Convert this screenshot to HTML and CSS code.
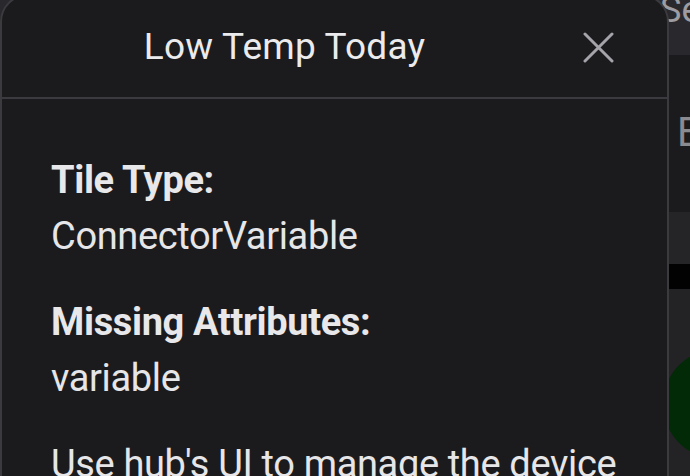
FILE: index.html
```
<!DOCTYPE html>
<html lang="en">
<head>
<meta charset="utf-8">
<title>Low Temp Today</title>
<link rel="stylesheet" href="styles.css">
</head>
<body>
<div class="app">
  <div class="topbar"><span class="topbar-title">Se</span></div>
  <div class="section"><span class="section-text">E</span></div>
  <div class="band"></div>
  <div class="blackbar"></div>
  <div class="tiles"><div class="tile-dot"></div></div>
</div>
<div class="dialog">
  <div class="dialog-header">
    <div class="dialog-title">Low Temp Today</div>
    <button class="close-btn" aria-label="Close">
      <svg width="31" height="31" viewBox="0 0 31 31"><path d="M2 2 L29 29 M29 2 L2 29" stroke="#a4a4aa" stroke-width="3" stroke-linecap="round" fill="none"/></svg>
    </button>
  </div>
  <div class="dialog-body">
    <div class="field">
      <div class="label">Tile Type:</div>
      <div class="value">ConnectorVariable</div>
    </div>
    <div class="field">
      <div class="label">Missing Attributes:</div>
      <div class="value">variable</div>
    </div>
    <div class="field">
      <div class="value">Use hub's UI to manage the device</div>
    </div>
  </div>
</div>
</body>
</html>
```
FILE: styles.css
```
* { box-sizing: border-box; }
html, body {
  margin: 0;
  padding: 0;
  width: 690px;
  height: 476px;
  overflow: hidden;
  background: #1c1c1f;
  font-family: Roboto, "Liberation Sans", sans-serif;
}
.app {
  display: flex;
  flex-direction: column;
  height: 476px;
}
.topbar {
  height: 55px;
  background: #29292d;
  padding-left: 660px;
  overflow: hidden;
}
.topbar-title {
  display: block;
  font-size: 36px;
  line-height: 36px;
  margin-top: -8px;
  color: #9c9ca2;
}
.section {
  height: 157px;
  background: #1b1b1e;
  padding-left: 677px;
  padding-top: 58px;
}
.section-text {
  display: block;
  font-size: 40px;
  line-height: 40px;
  color: #8a8a8f;
}
.band {
  height: 52px;
  background: #252528;
}
.blackbar {
  height: 25px;
  background: #020203;
}
.tiles {
  flex: 1;
  background: #232326;
  padding-top: 60px;
  padding-left: 663px;
}
.tile-dot {
  width: 110px;
  height: 110px;
  border-radius: 50%;
  background: #022a07;
}
.dialog {
  position: absolute;
  left: 0;
  top: -6px;
  width: 669px;
  height: 600px;
  background: #1b1b1d;
  border: 2px solid #3b3b3f;
  border-radius: 28px;
  color: #e6e6e9;
}
.dialog-header {
  height: 103px;
  display: flex;
  align-items: center;
  padding-right: 42px;
  border-bottom: 2px solid #3b3b3f;
}
.dialog-title {
  flex: 1;
  text-align: center;
  font-size: 37px;
  font-weight: 400;
  color: #ebebee;
  letter-spacing: 0.2px;
  padding-right: 4px;
}
.close-btn {
  width: 54px;
  height: 54px;
  background: transparent;
  border: 0;
  padding: 0;
  display: flex;
  align-items: center;
  justify-content: center;
  margin-top: 2px;
}
.dialog-body {
  padding: 53px 20px 0 49px;
}
.field {
  margin-bottom: 30px;
  font-size: 38px;
  line-height: 56px;
  letter-spacing: -0.35px;
}
.label {
  font-weight: 700;
  color: #e8e8eb;
}
.value {
  font-weight: 400;
  color: #e6e6e9;
  white-space: nowrap;
}
```
